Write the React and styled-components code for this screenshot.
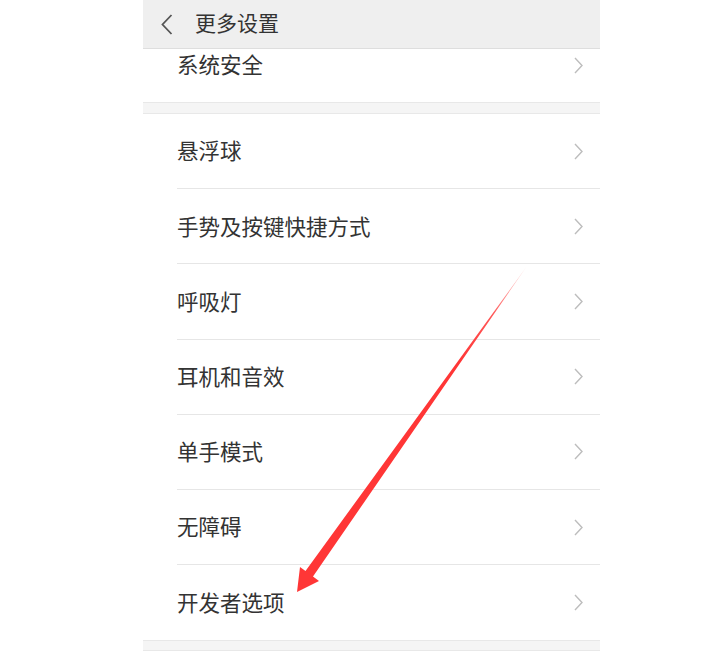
import React from "react";
import styled, { createGlobalStyle } from "styled-components";

const Global = createGlobalStyle`
  html, body { margin: 0; padding: 0; background: #ffffff; }
  body { font-family: "Noto Sans CJK SC", "Noto Sans", sans-serif; }
`;

const Page = styled.div`
  position: relative;
  width: 713px;
  height: 670px;
  overflow: hidden;
  background: #ffffff;
  display: flex;
  padding-left: 143px;
  box-sizing: border-box;
`;

const Phone = styled.div`
  width: 457px;
  display: flex;
  flex-direction: column;
`;

const Header = styled.header`
  height: 49px;
  box-sizing: border-box;
  background: #efefef;
  border-bottom: 1px solid #dedede;
  display: flex;
  align-items: center;
  padding-left: 18px;
  gap: 22px;
`;

const Title = styled.h1`
  margin: 0;
  font-size: 21px;
  font-weight: 400;
  line-height: 1;
  color: #333333;
  transform: translateY(-2px);
`;

const Row = styled.div`
  height: ${(p) => p.$h}px;
  box-sizing: border-box;
  margin-left: 34px;
  padding-right: 17px;
  padding-bottom: ${(p) => p.$pb || 0}px;
  display: flex;
  align-items: center;
  justify-content: space-between;
  border-bottom: ${(p) => (p.$last ? "none" : "1px solid #e6e6e6")};
`;

const Label = styled.span`
  font-size: 21.5px;
  line-height: 1;
  color: #333333;
  transform: translateY(-1px);
`;

const Gap = styled.div`
  height: ${(p) => p.$h}px;
  box-sizing: border-box;
  background: #f5f5f5;
  border-top: 1px solid #e8e8e8;
  border-bottom: 1px solid #e8e8e8;
`;

const Overlay = styled.svg`
  position: absolute;
  left: 0;
  top: 0;
  pointer-events: none;
`;

const Back = () => (
  <svg width="12" height="21" viewBox="0 0 12 21">
    <polyline points="10.5,1 1.5,10.5 10.5,20" fill="none" stroke="#555" strokeWidth="1.8" />
  </svg>
);

const Chev = () => (
  <svg width="9" height="17" viewBox="0 0 9 17">
    <polyline points="1,1 8,8.5 1,16" fill="none" stroke="#bdbdbd" strokeWidth="1.4" />
  </svg>
);

const items = ["悬浮球", "手势及按键快捷方式", "呼吸灯", "耳机和音效", "单手模式", "无障碍", "开发者选项"];

export default function App() {
  return (
    <>
      <Global />
      <Page>
        <Phone>
          <Header>
            <Back />
            <Title>更多设置</Title>
          </Header>
          <Row $h={53} $pb={21} $last>
            <Label>系统安全</Label>
            <Chev />
          </Row>
          <Gap $h={12} />
          {items.map((t, i) => (
            <Row key={t} $h={75.2} $last={i === items.length - 1}>
              <Label>{t}</Label>
              <Chev />
            </Row>
          ))}
          <Gap $h={11} />
        </Phone>
        <Overlay width="713" height="670" viewBox="0 0 713 670">
          <defs>
            <linearGradient id="ag" x1="527" y1="266" x2="300" y2="585" gradientUnits="userSpaceOnUse">
              <stop offset="0" stopColor="#ff4040" stopOpacity="0.15" />
              <stop offset="0.15" stopColor="#ff3a3a" stopOpacity="0.85" />
              <stop offset="0.3" stopColor="#ff3636" stopOpacity="1" />
              <stop offset="1" stopColor="#ff3636" stopOpacity="1" />
            </linearGradient>
          </defs>
          <polygon
            points="527,266 313,576.5 319,581 297,592 300,567 305.5,571 527,266"
            fill="url(#ag)"
          />
        </Overlay>
      </Page>
    </>
  );
}
